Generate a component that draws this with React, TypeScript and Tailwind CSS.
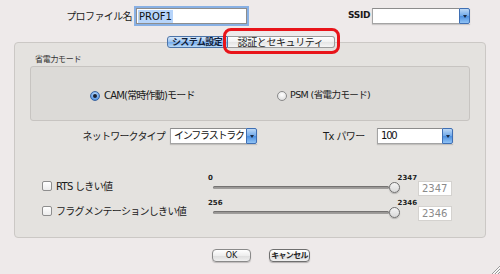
const font = "font-['DejaVu_Sans','Noto_Sans_CJK_JP',sans-serif]";

function Arrow() {
  return (
    <div className="w-[11px] h-full shrink-0 rounded-r-[2px] border border-[#3f6fb3] bg-[linear-gradient(#bcd8f6,#6ea8ea_50%,#4c8fe0_51%,#8fc2f5)] flex items-center justify-center">
      <div className="w-0 h-0 border-l-[2.5px] border-r-[2.5px] border-t-[3px] border-l-transparent border-r-transparent border-t-[#1b2b44]" />
    </div>
  );
}

function Select({ value, width }: { value: string; width: string }) {
  return (
    <div className={`flex h-[16px] ${width} shadow-[0_1px_1px_rgba(0,0,0,0.15)]`}>
      <div className="flex-1 overflow-hidden whitespace-nowrap border border-r-0 border-[#a4a4a4] border-t-[#8c8c8c] bg-white pl-[3px] text-[10px] leading-[14px] tracking-[-1.2px] text-[#111]">
        {value}
      </div>
      <Arrow />
    </div>
  );
}

function SliderRow({
  label,
  min,
  max,
  value,
}: {
  label: string;
  min: string;
  max: string;
  value: string;
}) {
  return (
    <div className="flex h-[22px] items-start">
      <div className="ml-[27px] flex h-[22px] w-[166px] items-center">
        <div className="h-[10px] w-[10px] rounded-[2px] border border-[#8e8e8e] bg-[linear-gradient(#fff,#ececec)]" />
        <span className="ml-[4px] text-[10px] tracking-[-0.7px] text-[#1a1a1a]">{label}</span>
      </div>
      <div className="flex w-[207px] flex-col">
        <div className="flex h-[7px] justify-between text-[7px] font-bold leading-[7px] text-[#222]">
          <span>{min}</span>
          <span className="mr-[-2px]">{max}</span>
        </div>
        <div className="flex h-[11px] items-center">
          <div className="ml-[5px] h-[3px] w-[176px] rounded-full bg-[#9f9d9b] shadow-[inset_0_1px_1px_rgba(0,0,0,0.3)]" />
          <div className="h-[11px] w-[11px] rounded-full border border-[#6f6f6f] bg-[linear-gradient(#f4f4f4,#d9d9d9)] shadow-[0_1px_1px_rgba(0,0,0,0.2)]" />
        </div>
      </div>
      <div className="ml-[3px] mt-[6px] h-[15px] w-[34px] border border-[#d4d2cf] bg-white pl-[3px] text-[10px] leading-[13px] text-[#8a8a8a]">
        {value}
      </div>
    </div>
  );
}

export default function App() {
  return (
    <div className={`relative h-[274px] w-[500px] overflow-hidden bg-[#eeeaea] ${font}`}>
      {/* profile name / ssid */}
      <div className="mt-[8px] flex h-[16px] items-center">
        <span className="ml-[62px] w-[70px] text-right text-[10px] tracking-[-0.6px] text-[#1a1a1a]">
          プロファイル名
        </span>
        <div className="ml-[4px] flex h-[16px] w-[111px] items-center border border-[#8d8d8d] bg-white pl-[1px] shadow-[0_0_0_2px_#88b0e4]">
          <span className="bg-[#b6d4fa] px-[1px] text-[10px] leading-[13px] text-[#111]">PROF1</span>
        </div>
        <span className="ml-[101px] w-[20px] text-right text-[9px] font-bold tracking-[-0.3px] text-[#1a1a1a]">
          SSID
        </span>
        <div className="ml-[4px]">
          <Select value="" width="w-[98px]" />
        </div>
      </div>

      {/* tabs */}
      <div className="relative z-10 mt-[12px] flex h-[12px] justify-center pl-[1px] leading-[11px]">
        <div className="flex w-[61px] items-center justify-center overflow-hidden whitespace-nowrap rounded-l-[3px] border border-[#4d74a8] bg-[linear-gradient(#d8e8fa,#9cc4f0_50%,#76aaea_51%,#b8daf8)] text-[9px] font-semibold tracking-[-0.6px] text-[#10203a]">
          システム設定
        </div>
        <div className="relative flex w-[107px] items-center justify-center whitespace-nowrap rounded-r-[3px] border border-l-0 border-[#9b9b9b] bg-[linear-gradient(#ffffff,#f1f1f1_50%,#e4e4e4_51%,#f6f6f6)] text-[10px] tracking-[-0.4px] text-[#1a1a1a]">
          認証とセキュリティ
          <span className="pointer-events-none absolute -bottom-[7px] -left-[5px] -right-[6px] -top-[9px] rounded-[8px] border-[3px] border-[#e8141a]" />
        </div>
      </div>

      {/* group box */}
      <div className="mx-[14px] -mt-[6px] flex h-[196px] w-[472px] flex-col rounded-[4px] border border-[#cbc8c5] bg-[#e4e2df]">
        <span className="ml-[20px] mt-[12px] h-[10px] text-[8px] leading-[10px] tracking-[-0.3px] text-[#333]">
          省電力モード
        </span>
        <div className="ml-[15px] mt-[1px] flex h-[55px] w-[440px] items-center rounded-[3px] border border-[#c7c4c1] bg-[#dcdad7] pt-[4px]">
          <div className="ml-[59px] flex w-[187px] items-center">
            <div className="flex h-[10px] w-[10px] items-center justify-center rounded-full border border-[#3b64a0] bg-[radial-gradient(circle_at_50%_35%,#c5e0fb,#5d9ae6_70%,#3a76c9)]">
              <div className="h-[4px] w-[4px] rounded-full bg-[#1a2233]" />
            </div>
            <span className="ml-[4px] text-[10px] tracking-[-0.8px] text-[#1a1a1a]">CAM(常時作動)モード</span>
          </div>
          <div className="flex items-center">
            <div className="h-[10px] w-[10px] rounded-full border border-[#8a8a8a] bg-[radial-gradient(circle_at_50%_35%,#ffffff,#e3e3e3_70%,#cfcfcf)]" />
            <span className="ml-[3px] text-[9.5px] tracking-[-0.6px] text-[#1a1a1a]">PSM (省電力モード)</span>
          </div>
        </div>

        {/* network / tx */}
        <div className="mt-[7px] flex h-[16px] items-center">
          <span className="ml-[65px] w-[85px] text-right text-[10px] tracking-[-0.8px] text-[#1a1a1a]">
            ネットワークタイプ
          </span>
          <div className="ml-[5px]">
            <Select value="インフラストラク" width="w-[87px]" />
          </div>
          <span className="ml-[66px] w-[43px] whitespace-nowrap text-[10px] tracking-[-0.6px] text-[#1a1a1a]">Tx パワー</span>
          <div className="ml-[11px]">
            <Select value="100" width="w-[76px]" />
          </div>
        </div>

        <div className="mt-[31px] flex flex-col gap-[3px]">
          <SliderRow label="RTS しきい値" min="0" max="2347" value="2347" />
          <SliderRow label="フラグメンテーションしきい値" min="256" max="2346" value="2346" />
        </div>
      </div>

      {/* buttons */}
      <div className="mt-[11px] flex h-[13px]">
        <div className="ml-[212px] flex w-[39px] items-center justify-center rounded-[4px] border border-[#8a8a8a] bg-[linear-gradient(#ffffff,#eeeeee_50%,#dcdcdc_51%,#f0f0f0)] text-[8px] text-[#222] shadow-[0_1px_1px_rgba(0,0,0,0.2)]">
          OK
        </div>
        <div className="ml-[18px] flex w-[41px] items-center justify-center whitespace-nowrap rounded-[4px] border border-[#6f6f6f] bg-[linear-gradient(#ffffff,#eeeeee_50%,#dcdcdc_51%,#f0f0f0)] text-[8px] font-bold tracking-[-0.7px] text-[#222] shadow-[0_1px_1px_rgba(0,0,0,0.25)]">
          キャンセル
        </div>
      </div>

      {/* resize grip */}
      <svg className="absolute bottom-0 right-0" width="11" height="11" viewBox="0 0 11 11">
        <path d="M3 11 L11 3 M6 11 L11 6 M9 11 L11 9" stroke="#9a9a9a" strokeWidth="1" />
        <path d="M4 11 L11 4 M7 11 L11 7" stroke="#ffffff" strokeWidth="1" />
      </svg>
    </div>
  );
}
